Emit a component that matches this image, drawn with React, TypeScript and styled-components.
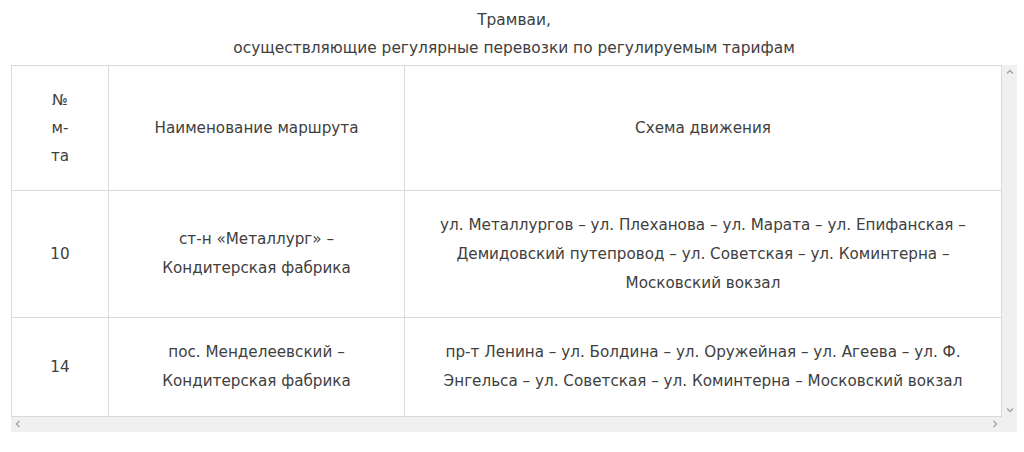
import React from "react";
import styled, { createGlobalStyle } from "styled-components";

const Global = createGlobalStyle`
  html, body { margin: 0; padding: 0; background: #ffffff; }
  body { font-family: "DejaVu Sans", "Liberation Sans", sans-serif; color: #404040; }
`;

const Page = styled.div`
  padding: 6px 7px 0 11px;
`;

const Title = styled.div`
  text-align: center;
  font-size: 15.4px;
  line-height: 28px;
  margin-bottom: 3px;
  color: #404040;
`;

const Frame = styled.div`
  display: grid;
  grid-template-columns: 1fr 15px;
  grid-template-rows: auto 15px;
  background: #f0f0f0;
`;

const Viewport = styled.div`
  background: #ffffff;
`;

const Table = styled.table`
  width: 100%;
  border-collapse: collapse;
  table-layout: fixed;
  font-size: 15.2px;
  color: #404040;
`;

const Col = styled.col<{ $w: number }>`
  width: ${(p) => p.$w}px;
`;

const Cell = styled.td<{ $head?: boolean }>`
  border: 1px solid #d9d9d9;
  padding: 20px 10px;
  text-align: center;
  vertical-align: middle;
  line-height: ${(p) => (p.$head ? "28px" : "28.8px")};
`;

const VBar = styled.div`
  display: flex;
  flex-direction: column;
  justify-content: space-between;
  align-items: center;
  padding: 2px 0;
`;

const HBar = styled.div`
  display: flex;
  justify-content: space-between;
  align-items: center;
  padding: 0 2px;
`;

const Arrow = styled.svg`
  width: 10px;
  height: 10px;
  display: block;
`;

const Chevron = ({ dir }: { dir: "up" | "down" | "left" | "right" }) => {
  const paths: Record<string, string> = {
    up: "M2 6.5 L5 3.5 L8 6.5",
    down: "M2 3.5 L5 6.5 L8 3.5",
    left: "M6.5 2 L3.5 5 L6.5 8",
    right: "M3.5 2 L6.5 5 L3.5 8",
  };
  return (
    <Arrow viewBox="0 0 10 10">
      <path d={paths[dir]} fill="none" stroke="#a3a3a3" strokeWidth="1.4" />
    </Arrow>
  );
};

const rows = [
  {
    n: "10",
    name: ["ст-н «Металлург» –", "Кондитерская фабрика"],
    scheme: [
      "ул. Металлургов – ул. Плеханова – ул. Марата – ул. Епифанская –",
      "Демидовский путепровод – ул. Советская – ул. Коминтерна –",
      "Московский вокзал",
    ],
  },
  {
    n: "14",
    name: ["пос. Менделеевский –", "Кондитерская фабрика"],
    scheme: [
      "пр-т Ленина – ул. Болдина – ул. Оружейная – ул. Агеева – ул. Ф.",
      "Энгельса – ул. Советская – ул. Коминтерна – Московский вокзал",
    ],
  },
];

const Lines = ({ lines }: { lines: string[] }) => (
  <>
    {lines.map((l, i) => (
      <React.Fragment key={i}>
        {i > 0 && <br />}
        {l}
      </React.Fragment>
    ))}
  </>
);

export default function App() {
  return (
    <>
      <Global />
      <Page>
        <Title>
          Трамваи,
          <br />
          осуществляющие регулярные перевозки по регулируемым тарифам
        </Title>
        <Frame>
          <Viewport>
            <Table>
              <colgroup>
                <Col $w={97} />
                <Col $w={296} />
                <Col $w={597} />
              </colgroup>
              <tbody>
                <tr>
                  <Cell $head>
                    <Lines lines={["№", "м-", "та"]} />
                  </Cell>
                  <Cell $head>Наименование маршрута</Cell>
                  <Cell $head>Схема движения</Cell>
                </tr>
                {rows.map((r) => (
                  <tr key={r.n}>
                    <Cell>{r.n}</Cell>
                    <Cell>
                      <Lines lines={r.name} />
                    </Cell>
                    <Cell>
                      <Lines lines={r.scheme} />
                    </Cell>
                  </tr>
                ))}
              </tbody>
            </Table>
          </Viewport>
          <VBar>
            <Chevron dir="up" />
            <Chevron dir="down" />
          </VBar>
          <HBar>
            <Chevron dir="left" />
            <Chevron dir="right" />
          </HBar>
          <div />
        </Frame>
      </Page>
    </>
  );
}
